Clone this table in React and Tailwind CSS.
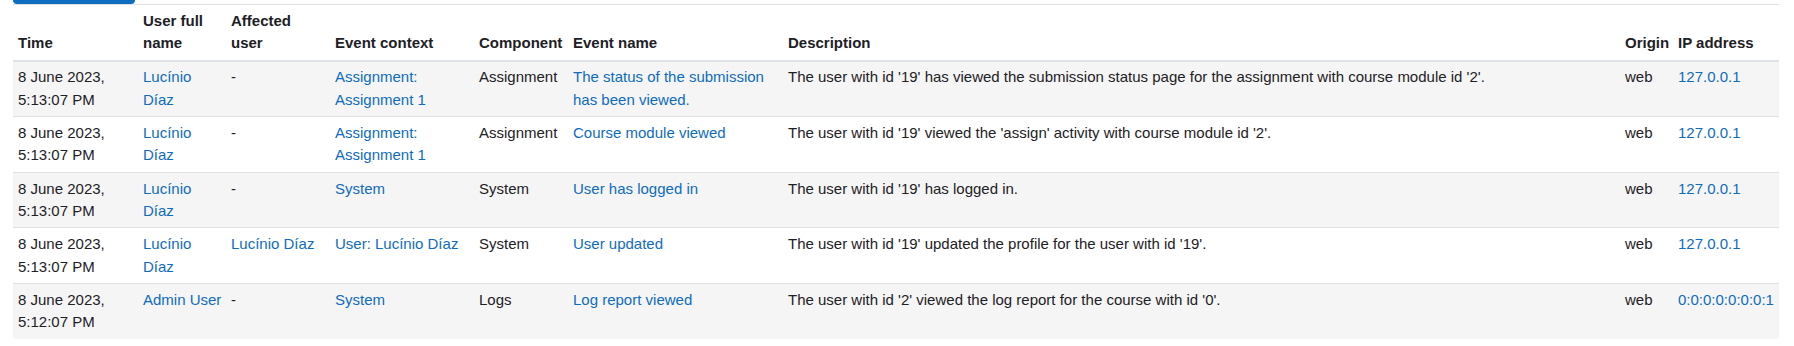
import React from 'react';

const rows = [
  {
    time: ['8 June 2023,', '5:13:07 PM'],
    user: 'Lucínio Díaz',
    affected: '-',
    context: 'Assignment: Assignment 1',
    component: 'Assignment',
    event: 'The status of the submission has been viewed.',
    description:
      "The user with id '19' has viewed the submission status page for the assignment with course module id '2'.",
    origin: 'web',
    ip: '127.0.0.1',
  },
  {
    time: ['8 June 2023,', '5:13:07 PM'],
    user: 'Lucínio Díaz',
    affected: '-',
    context: 'Assignment: Assignment 1',
    component: 'Assignment',
    event: 'Course module viewed',
    description: "The user with id '19' viewed the 'assign' activity with course module id '2'.",
    origin: 'web',
    ip: '127.0.0.1',
  },
  {
    time: ['8 June 2023,', '5:13:07 PM'],
    user: 'Lucínio Díaz',
    affected: '-',
    context: 'System',
    component: 'System',
    event: 'User has logged in',
    description: "The user with id '19' has logged in.",
    origin: 'web',
    ip: '127.0.0.1',
  },
  {
    time: ['8 June 2023,', '5:13:07 PM'],
    user: 'Lucínio Díaz',
    affected: 'Lucínio Díaz',
    context: 'User: Lucínio Díaz',
    component: 'System',
    event: 'User updated',
    description: "The user with id '19' updated the profile for the user with id '19'.",
    origin: 'web',
    ip: '127.0.0.1',
  },
  {
    time: ['8 June 2023,', '5:12:07 PM'],
    user: 'Admin User',
    affected: '-',
    context: 'System',
    component: 'Logs',
    event: 'Log report viewed',
    description: "The user with id '2' viewed the log report for the course with id '0'.",
    origin: 'web',
    ip: '0:0:0:0:0:0:0:1',
  },
];

const headers = [
  'Time',
  'User full name',
  'Affected user',
  'Event context',
  'Component',
  'Event name',
  'Description',
  'Origin',
  'IP address',
];

const Link = ({ children, className = '' }) => (
  <a href="#" className={`text-[#0f6cbf] ${className}`}>
    {children}
  </a>
);

const td = 'px-[5px] py-[4.8px] align-top border-t border-[#dee2e6]';

export default function App() {
  return (
    <div
      className="bg-white min-h-[346px] px-[13px] text-[15px] leading-[22.5px] text-[#1d2125]"
      style={{ fontFamily: '"Liberation Sans", Arial, sans-serif' }}
    >
      <div className="w-[122px] h-[4px] rounded-b-[4px] bg-[#0f6cbf]" />
      <table className="table-fixed w-[1766px] border-collapse">
        <colgroup>
          <col className="w-[125px]" />
          <col className="w-[88px]" />
          <col className="w-[104px]" />
          <col className="w-[144px]" />
          <col className="w-[94px]" />
          <col className="w-[215px]" />
          <col className="w-[837px]" />
          <col className="w-[53px]" />
          <col className="w-[106px]" />
        </colgroup>
        <thead>
          <tr>
            {headers.map((h) => (
              <th
                key={h}
                className="px-[5px] py-[4.8px] text-left align-bottom font-bold border-t border-b-2 border-[#dee2e6]"
              >
                {h}
              </th>
            ))}
          </tr>
        </thead>
        <tbody>
          {rows.map((r, i) => (
            <tr key={i} className={i % 2 === 0 ? 'bg-[#f5f5f5]' : 'bg-white'}>
              <td className={td}>
                {r.time[0]}
                <br />
                {r.time[1]}
              </td>
              <td className={td}>
                <Link className={r.user === 'Admin User' ? 'whitespace-nowrap' : ''}>{r.user}</Link>
              </td>
              <td className={td}>
                {r.affected === '-' ? '-' : <Link>{r.affected}</Link>}
              </td>
              <td className={td}>
                <Link>{r.context}</Link>
              </td>
              <td className={td}>{r.component}</td>
              <td className={td}>
                <Link>{r.event}</Link>
              </td>
              <td className={td}>{r.description}</td>
              <td className={td}>{r.origin}</td>
              <td className={`${td} whitespace-nowrap`}>
                <Link>{r.ip}</Link>
              </td>
            </tr>
          ))}
        </tbody>
      </table>
    </div>
  );
}
